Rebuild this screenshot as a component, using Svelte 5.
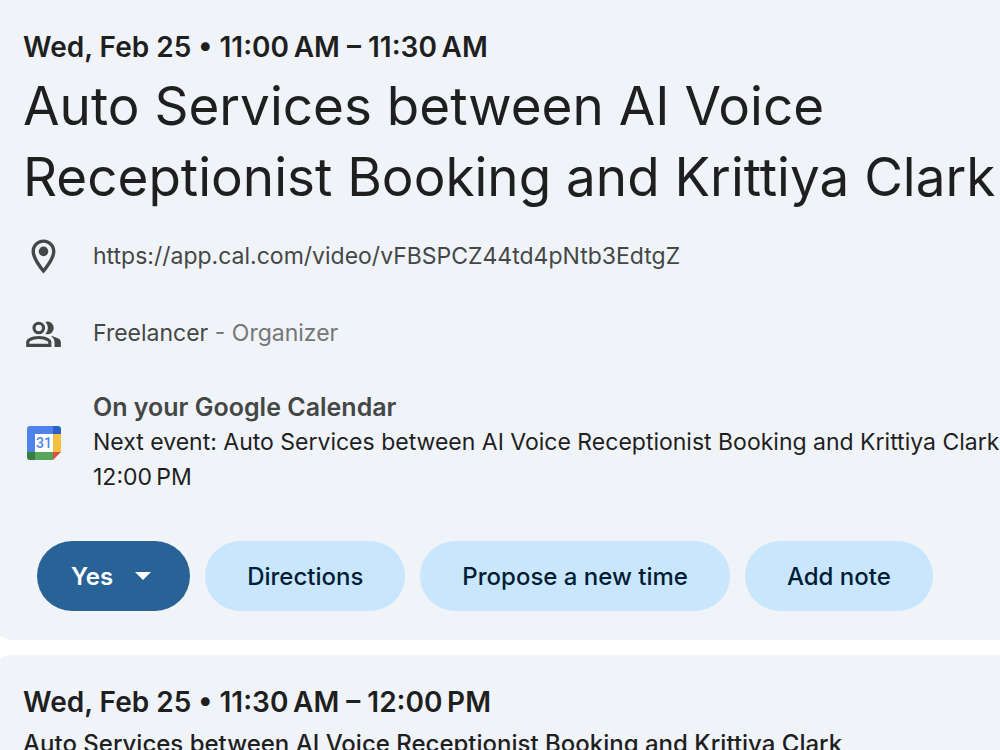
<script lang="ts">
  const actions = ['Directions', 'Propose a new time', 'Add note'];
</script>

<main>
  <section class="card">
    <p class="time">Wed, Feb 25 • 11:00&#8239;AM – 11:30&#8239;AM</p>
    <h1>Auto Services between AI Voice<br />Receptionist Booking and Krittiya Clark</h1>

    <div class="row location">
      <svg class="icon" viewBox="0 0 24 24" aria-hidden="true">
        <path d="M12 2C8.13 2 5 5.13 5 9c0 5.25 7 13 7 13s7-7.75 7-13c0-3.87-3.13-7-7-7zM7 9c0-2.76 2.24-5 5-5s5 2.24 5 5c0 2.88-2.88 7.19-5 9.88C9.92 16.21 7 11.85 7 9z" />
        <circle cx="12" cy="9" r="2.8" />
      </svg>
      <a href="https://app.cal.com/video/vFBSPCZ44td4pNtb3EdtgZ">https://app.cal.com/video/vFBSPCZ44td4pNtb3EdtgZ</a>
    </div>

    <div class="row people">
      <svg class="icon" viewBox="0 -1.5 26 26" aria-hidden="true">
        <path fill-rule="evenodd" d="M2 20v-2.8c0-.6.15-1.1.44-1.55s.68-.8 1.16-1.05a15 15 0 0 1 3.15-1.16 13.8 13.8 0 0 1 6.5 0c1.07.26 2.12.65 3.15 1.16.48.25.87.6 1.16 1.05S18 16.6 18 17.2V20zm2-2h12v-.8a.96.96 0 0 0-.5-.85 13 13 0 0 0-2.72-1.01 11.6 11.6 0 0 0-5.56 0A13 13 0 0 0 4.5 16.35a.96.96 0 0 0-.5.85zM10 12a4 4 0 1 1 0-8 4 4 0 0 1 0 8zm0-2a2 2 0 1 0 0-4 2 2 0 0 0 0 4z" />
        <path d="M20 20v-3c0-.73-.2-1.44-.61-2.11a5.8 5.8 0 0 0-1.74-1.74c.85.1 1.65.27 2.4.51s1.45.54 2.1.89c.6.33 1.06.7 1.37 1.11S24 16.52 24 17v3zM19.5 8a4 4 0 0 1-4 4 5.8 5.8 0 0 1-1.3-.15A5.9 5.9 0 0 0 15.8 8a5.9 5.9 0 0 0-1.6-3.85A4 4 0 0 1 19.5 8z" />
      </svg>
      <p>Freelancer <span>- Organizer</span></p>
    </div>

    <div class="row agenda">
      <svg class="calendar" viewBox="0 0 34 34" aria-hidden="true">
        <path fill="#4f83ec" d="M3 0h23v8H8v18H0V3a3 3 0 0 1 3-3z" />
        <path fill="#2b62c9" d="M26 0h5a3 3 0 0 1 3 3v5h-8z" />
        <path fill="#f2bf42" d="M26 8h8v18h-8z" />
        <path fill="#58a55c" d="M8 26h18v8H8z" />
        <path fill="#387e41" d="M0 26h8v8H3a3 3 0 0 1-3-3z" />
        <path fill="#d95140" d="M26 26h8l-8 8z" />
        <path fill="#fff" d="M8 8h18v18H8z" />
        <text x="17" y="22" text-anchor="middle">31</text>
      </svg>
      <div>
        <h2>On your Google Calendar</h2>
        <p>Next event: Auto Services between AI Voice Receptionist Booking and Krittiya Clark</p>
        <p>12:00&#8239;PM</p>
      </div>
    </div>

    <div class="actions">
      <button class="yes" type="button">
        Yes
        <svg viewBox="0 0 16 8" aria-hidden="true"><path d="M0 0h16L8 8z" /></svg>
      </button>
      {#each actions as action}
        <button type="button">{action}</button>
      {/each}
    </div>
  </section>

  <section class="card next">
    <p class="time">Wed, Feb 25 • 11:30&#8239;AM – 12:00&#8239;PM</p>
    <p class="summary">Auto Services between AI Voice Receptionist Booking and Krittiya Clark</p>
  </section>
</main>

<style>
  :global(body) {
    background: #fff;
    overflow: hidden;
  }

  main {
    display: flex;
    flex-direction: column;
    gap: 15px;
    height: 100vh;
    margin-left: -5px;
    overflow: hidden;
    color: #1f1f1f;
    font-family: Inter, sans-serif;
    white-space: nowrap;
  }

  h1, h2, p {
    margin: 0;
  }

  .card {
    flex-shrink: 0;
    padding: 29px 0 29px 28px;
    border-radius: 0 0 0 16px;
    background: #f0f4f9;
  }

  .next {
    border-radius: 16px 0 0;
  }

  .time {
    font-size: 28px;
    font-weight: 600;
    line-height: 36px;
  }

  h1 {
    margin-top: 6px;
    font-size: 53px;
    font-weight: 400;
    line-height: 71px;
  }

  .row {
    display: flex;
    align-items: center;
    gap: 29px;
    color: #444746;
    font-size: 23px;
    line-height: 35px;
  }

  .icon {
    width: 41px;
    height: 41px;
    fill: #444746;
  }

  .location {
    margin-top: 23px;
  }

  .people {
    margin-top: 36px;
  }

  .agenda {
    margin-top: 36px;
    color: #1f1f1f;
  }

  a {
    color: inherit;
    text-decoration: none;
  }

  span {
    color: #747775;
  }

  h2 {
    color: #444746;
    font-size: 25px;
    font-weight: 600;
  }

  .calendar {
    flex-shrink: 0;
    width: 34px;
    height: 34px;
    margin: 0 3px 0 4px;
  }

  text {
    fill: #4f83ec;
    font: 500 14px Roboto, sans-serif;
  }

  .actions {
    display: flex;
    gap: 15px;
    margin: 46px 0 0 14px;
  }

  button {
    height: 70px;
    padding: 0 42px;
    border: 0;
    border-radius: 35px;
    background: #c9e6fd;
    color: #001d35;
    font: 500 24px Inter, sans-serif;
  }

  .yes {
    display: flex;
    align-items: center;
    gap: 22px;
    padding: 0 39px 0 34px;
    background: #286296;
    color: #fff;
    font-weight: 600;
  }

  .yes svg {
    width: 16px;
    height: 8px;
    fill: #fff;
  }

  .summary {
    margin-top: 6px;
    font-size: 24px;
    font-weight: 500;
    line-height: 35px;
  }
</style>
